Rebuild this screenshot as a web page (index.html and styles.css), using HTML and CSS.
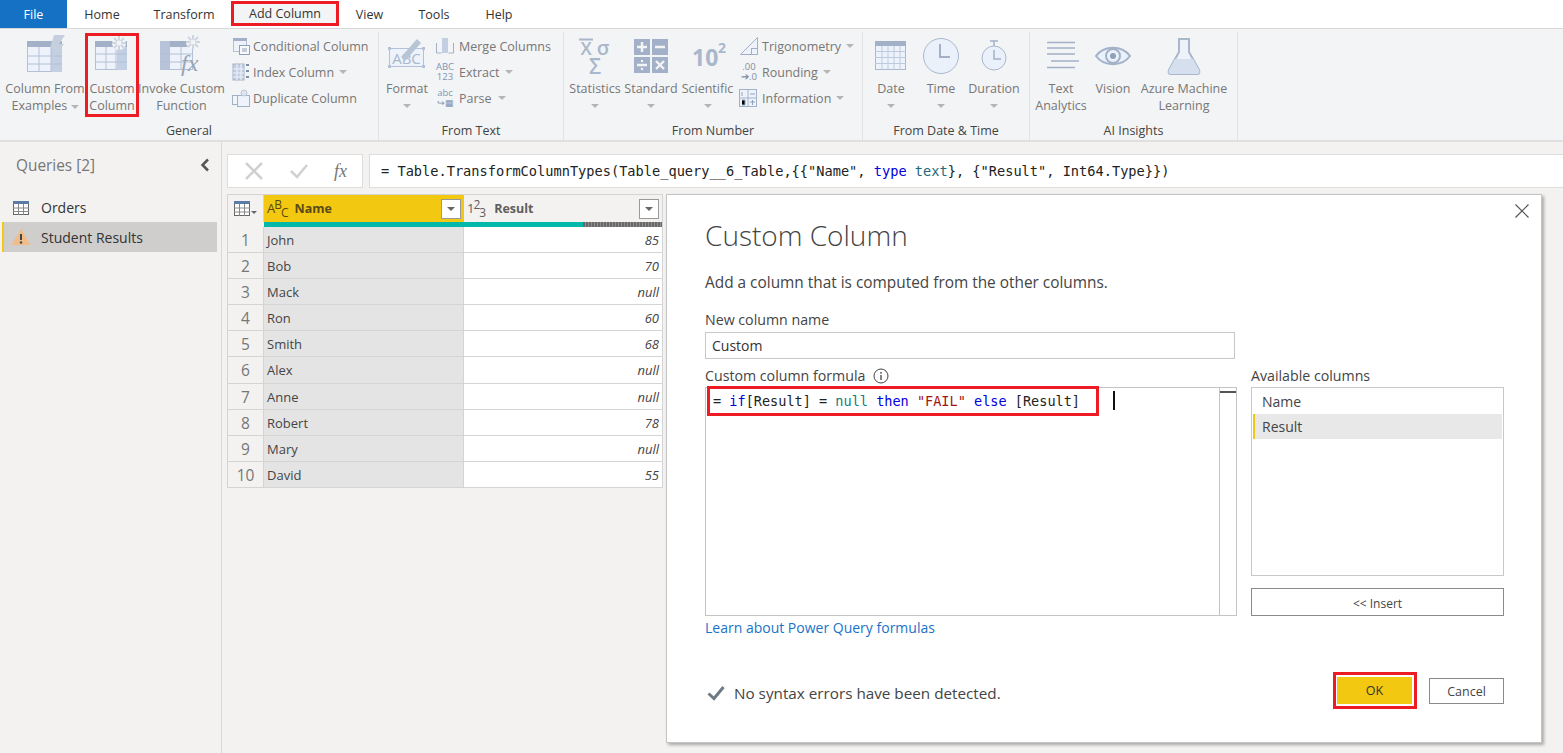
FILE: index.html
```html
<!DOCTYPE html>
<html>
<head>
<meta charset="utf-8">
<title>Custom Column</title>
<link rel="stylesheet" href="styles.css">
</head>
<body>
<div class="tabs">
    <div class="tab tab-file">File</div>
    <div class="tab tab-home">Home</div>
    <div class="tab tab-transform">Transform</div>
    <div class="tab tab-add">Add Column</div>
    <div class="tab tab-view">View</div>
    <div class="tab tab-tools">Tools</div>
    <div class="tab tab-help">Help</div>
</div>

<div class="ribbon">
    <div class="group group-general">
        <div class="items">
            <div class="big b-examples">
                <svg class="ico" width="46" height="46" viewBox="0 0 46 46"><rect x="5.5" y="8.5" width="34" height="30" fill="#eef3fb" stroke="#b3c0d6"/><rect x="5" y="8" width="35" height="6" fill="#a3b1c8"/><rect x="29" y="14" width="11" height="25" fill="#c3cfe2"/><path d="M5 23h35M5 31h35M17 14v25M29 14v25" stroke="#b3c0d6"/><path d="M32 2h11l-6 9h5l-13 17 4-13h-5z" fill="#c5cfdd"/></svg>
                <div class="lbl">Column From<br>Examples <i class="caret"></i></div>
            </div>
            <div class="big b-custom marked">
                <svg class="ico" width="46" height="46" viewBox="0 0 46 46"><rect x="6.5" y="8.5" width="31" height="28" fill="#eef3fb" stroke="#b3c0d6"/><rect x="6" y="8" width="32" height="6" fill="#a3b1c8"/><rect x="28" y="14" width="10" height="23" fill="#c3cfe2"/><path d="M6 21h32M6 29h32M17 14v23M27 14v23" stroke="#b3c0d6"/><circle cx="30" cy="10" r="7" fill="#f3f4f5"/><path d="M30 3v14M23 10h14M25 5l10 10M35 5L25 15" stroke="#cdd5e1" stroke-width="2"/><circle cx="30" cy="10" r="2.5" fill="#f3f4f5"/></svg>
                <div class="lbl">Custom<br>Column</div>
            </div>
            <div class="big b-invoke">
                <svg class="ico" width="46" height="46" viewBox="0 0 46 46"><rect x="1.5" y="8.5" width="32" height="28" fill="#eef3fb" stroke="#b3c0d6"/><rect x="1" y="8" width="33" height="6" fill="#a3b1c8"/><rect x="1" y="8" width="10" height="29" fill="#b6c3d8"/><path d="M1 21h33M1 29h33M22 14v23" stroke="#b3c0d6"/><circle cx="34" cy="9" r="7" fill="#f3f4f5"/><path d="M34 2v14M27 9h14M29 4l10 10M39 4L29 14" stroke="#cdd5e1" stroke-width="2"/><circle cx="34" cy="9" r="2.5" fill="#f3f4f5"/><text x="22" y="38" class="fx">fx</text></svg>
                <div class="lbl">Invoke Custom<br>Function</div>
            </div>
            <div class="smalls s-general">
                <div class="small"><svg width="18" height="18" viewBox="0 0 18 18"><rect x="1.5" y="1.5" width="13" height="13" fill="#eef3fb" stroke="#b3c0d6"/><rect x="1" y="1" width="14" height="3" fill="#a3b1c8"/><rect x="7.5" y="8.5" width="10" height="9" fill="#f8f9fb" stroke="#8ea0ba"/><path d="M10 12h5M10 14h5" stroke="#8ea0ba"/></svg><span>Conditional Column</span></div>
                <div class="small"><svg width="18" height="18" viewBox="0 0 18 18"><rect x="1" y="1" width="11" height="16" fill="#c3cfe2" stroke="#a3b1c8"/><path d="M1 6h11M1 10h11M1 14h11M5 1v16M9 1v16" stroke="#eef3fb"/><path d="M14 2h3M14 8h3M14 14h3" stroke="#7f8ea6" stroke-width="2"/></svg><span>Index Column</span><i class="caret"></i></div>
                <div class="small"><svg width="18" height="18" viewBox="0 0 18 18"><rect x=".5" y="6.5" width="9" height="9" fill="none" stroke="#a3b1c8"/><rect x="5.5" y="6.5" width="12" height="11" fill="#eef3fb" stroke="#a3b1c8"/><circle cx="12" cy="4" r="3" fill="#dfe5ee" stroke="#bcc8da"/></svg><span>Duplicate Column</span></div>
            </div>
        </div>
        <div class="group-name">General</div>
    </div>

    <div class="group group-text">
        <div class="items">
            <div class="big b-format">
                <svg class="ico" width="40" height="46" viewBox="0 0 40 46"><rect x="2.5" y="15.5" width="34" height="18" fill="#eef3fb" stroke="#b3c0d6"/><rect x="1" y="14" width="3" height="3" fill="#b3c0d6"/><rect x="35" y="14" width="3" height="3" fill="#b3c0d6"/><rect x="1" y="32" width="3" height="3" fill="#b3c0d6"/><rect x="35" y="32" width="3" height="3" fill="#b3c0d6"/><text x="19.5" y="31" class="abc">ABC</text><path d="M14 24L30 6l4 4-16 18z" fill="#b7c3d6"/></svg>
                <div class="lbl">Format</div>
                <i class="caret"></i>
            </div>
            <div class="smalls s-text">
                <div class="small"><svg width="20" height="18" viewBox="0 0 20 18"><path d="M1.5 6v10h5M18.5 6v10h-5" fill="none" stroke="#a3b1c8"/><rect x="7" y="1" width="6" height="15" fill="#c3cfe2"/></svg><span>Merge Columns</span></div>
                <div class="small"><span class="ico-txt">ABC<br>123</span><span>Extract</span><i class="caret"></i></div>
                <div class="small"><span class="ico-txt ico-parse">abc<br><b>↪▦</b></span><span>Parse</span><i class="caret"></i></div>
            </div>
        </div>
        <div class="group-name">From Text</div>
    </div>

    <div class="group group-number">
        <div class="items">
            <div class="big b-stat">
                <svg class="ico" width="56" height="46" viewBox="0 0 56 46"><text x="19" y="22" class="stat">X</text><text x="36" y="22" class="stat stat-s">σ</text><path d="M12 6.5h14" stroke="#a9b7cd" stroke-width="2"/><text x="28" y="41" class="stat sig">Σ</text></svg>
                <div class="lbl">Statistics</div>
                <i class="caret"></i>
            </div>
            <div class="big b-standard">
                <svg class="ico" width="46" height="46" viewBox="0 0 46 46"><rect x="6" y="6" width="16" height="16" fill="#a3b1c8"/><rect x="24" y="6" width="16" height="16" fill="#a3b1c8"/><rect x="6" y="24" width="16" height="16" fill="#a3b1c8"/><rect x="24" y="24" width="16" height="16" fill="#a3b1c8"/><path d="M9 14h10M14 9v10M27 14h10M9 32h10M28 28l8 8M36 28l-8 8" stroke="#f3f4f5" stroke-width="2.4"/><circle cx="14" cy="28" r="1.2" fill="#f3f4f5"/><circle cx="14" cy="36" r="1.2" fill="#f3f4f5"/></svg>
                <div class="lbl">Standard</div>
                <i class="caret"></i>
            </div>
            <div class="big b-sci">
                <svg class="ico" width="46" height="46" viewBox="0 0 46 46"><text x="7" y="33" class="ten">10</text><text x="33" y="20" class="two">2</text></svg>
                <div class="lbl">Scientific</div>
                <i class="caret"></i>
            </div>
            <div class="smalls s-number">
                <div class="small"><svg width="20" height="18" viewBox="0 0 20 18"><path d="M1.5 17.5L18.5 .5v17z" fill="#eef3fb" stroke="#a3b1c8"/><rect x="12.5" y="11.5" width="6" height="6" fill="none" stroke="#a3b1c8"/></svg><span>Trigonometry</span><i class="caret"></i></div>
                <div class="small"><span class="ico-txt ico-round">.00<br>➔.0</span><span>Rounding</span><i class="caret"></i></div>
                <div class="small"><svg width="20" height="18" viewBox="0 0 20 18"><rect x=".5" y=".5" width="17" height="17" fill="#eef3fb" stroke="#a3b1c8"/><path d="M9 0v18M0 9h18" stroke="#a3b1c8"/><path d="M11 5h5M11 13h5M13.5 11v5M3 3v4M3 11h3v5h-3" stroke="#8ea0ba"/></svg><span>Information</span><i class="caret"></i></div>
            </div>
        </div>
        <div class="group-name">From Number</div>
    </div>

    <div class="group group-date">
        <div class="items">
            <div class="big b-date">
                <svg class="ico" width="34" height="46" viewBox="0 0 34 46"><rect x="1.5" y="8.5" width="30" height="28" fill="#eef3fb" stroke="#a9b7cd"/><rect x="1" y="8" width="31" height="5" fill="#a3b1c8"/><path d="M1 18.5h31M1 24.5h31M1 30.5h31M8 13v24M14 13v24M20 13v24M26 13v24" stroke="#bccadd"/></svg>
                <div class="lbl">Date</div>
                <i class="caret"></i>
            </div>
            <div class="big b-time">
                <svg class="ico" width="38" height="46" viewBox="0 0 38 46"><circle cx="19" cy="23" r="17.5" fill="#eaf1fb" stroke="#a9b7cd"/><path d="M18 11v13h10" fill="none" stroke="#a3b1c8" stroke-width="2"/></svg>
                <div class="lbl">Time</div>
                <i class="caret"></i>
            </div>
            <div class="big b-duration">
                <svg class="ico" width="30" height="46" viewBox="0 0 30 46"><circle cx="15" cy="25" r="12" fill="#eaf1fb" stroke="#a9b7cd"/><path d="M11 8h8M15 8v5M15 17v9h7" fill="none" stroke="#a3b1c8" stroke-width="1.5"/></svg>
                <div class="lbl">Duration</div>
                <i class="caret"></i>
            </div>
        </div>
        <div class="group-name">From Date &amp; Time</div>
    </div>

    <div class="group group-ai">
        <div class="items">
            <div class="big b-analytics">
                <svg class="ico" width="36" height="46" viewBox="0 0 36 46"><path d="M4 9.5h28M4 15h28M4 21h28M8 28h28M4 34.5h28" stroke="#a3b1c8" stroke-width="1.5"/></svg>
                <div class="lbl">Text<br>Analytics</div>
            </div>
            <div class="big b-vision">
                <svg class="ico" width="38" height="46" viewBox="0 0 38 46"><path d="M2 23C10 12 28 12 36 23 28 34 10 34 2 23z" fill="#eaf1fb" stroke="#a3b1c8" stroke-width="2"/><circle cx="19" cy="23" r="7" fill="none" stroke="#a3b1c8" stroke-width="2"/><circle cx="19" cy="23" r="3" fill="#8ea0ba"/></svg>
                <div class="lbl">Vision</div>
            </div>
            <div class="big b-azure">
                <svg class="ico" width="36" height="46" viewBox="0 0 36 46"><path d="M13 6h10v13l10 18c1 3 0 4-2 4H5c-2 0-3-1-2-4l10-18z" fill="#eef3fb" stroke="#a9b7cd" stroke-width="2"/><path d="M9 26h18l6 11c1 3 0 4-2 4H5c-2 0-3-1-2-4z" fill="#d5dfee"/></svg>
                <div class="lbl">Azure Machine<br>Learning</div>
            </div>
        </div>
        <div class="group-name">AI Insights</div>
    </div>
</div>

<div class="main">
    <div class="side">
        <div class="side-head">
            <span>Queries [2]</span>
            <svg width="10" height="14" viewBox="0 0 10 14"><path d="M8 1.5L2.5 7 8 12.5" fill="none" stroke="#555" stroke-width="2.5"/></svg>
        </div>
        <div class="query">
            <svg width="16" height="14" viewBox="0 0 16 14"><rect x=".5" y=".5" width="15" height="13" fill="#fff" stroke="#666"/><rect x="0" y="0" width="16" height="3" fill="#5a7ba6"/><path d="M0 7h16M0 10.5h16M5.5 3v11M10.5 3v11" stroke="#888"/></svg>
            <span>Orders</span>
        </div>
        <div class="query selected">
            <svg width="20" height="18" viewBox="0 0 20 18"><path d="M10 1l9.5 16H.5z" fill="#f0bd8a"/><path d="M10 6v6" stroke="#444" stroke-width="2"/><circle cx="10" cy="14.5" r="1.2" fill="#444"/></svg>
            <span>Student Results</span>
        </div>
    </div>

    <div class="content">
        <div class="fbar">
            <div class="fbar-btns">
                <svg width="20" height="20" viewBox="0 0 20 20"><path d="M2 2l16 16M18 2L2 18" stroke="#d0d0d0" stroke-width="2.5"/></svg>
                <svg width="20" height="20" viewBox="0 0 20 20"><path d="M2 10l6 6L18 4" fill="none" stroke="#d0d0d0" stroke-width="2.5"/></svg>
                <span class="fx-btn">fx</span>
            </div>
            <div class="fbar-input">= Table.TransformColumnTypes(Table_query__6_Table,{{"Name", <span class="kw">type</span> <span class="kt">text</span>}, {"Result", Int64.Type}})</div>
        </div>

        <div class="grid">
            <div class="ghead">
                <div class="gcorner">
                    <svg width="16" height="15" viewBox="0 0 16 15"><rect x=".5" y=".5" width="15" height="14" fill="#fff" stroke="#666"/><rect x="0" y="0" width="16" height="3" fill="#5a7ba6"/><path d="M0 7h16M0 11h16M5.5 3v12M10.5 3v12" stroke="#888"/></svg>
                    <i class="caret caret-dark"></i>
                </div>
                <div class="gcol gname">
                    <span class="type-ic"><span>A</span><sup>B</sup><sub>C</sub></span>
                    <span class="gtitle">Name</span>
                    <span class="filter"><i class="caret caret-dark"></i></span>
                </div>
                <div class="gcol gresult">
                    <span class="type-ic"><span>1</span><sup>2</sup><sub>3</sub></span>
                    <span class="gtitle">Result</span>
                    <span class="filter"><i class="caret caret-dark"></i></span>
                </div>
            </div>
            <div class="gquality">
                <div class="q-gap"></div>
                <div class="q-name"></div>
                <div class="q-result"><div class="q-ok"></div><div class="q-empty"></div></div>
            </div>
            <div class="row"><div class="rn">1</div><div class="cn">John</div><div class="cv">85</div></div>
            <div class="row"><div class="rn">2</div><div class="cn">Bob</div><div class="cv">70</div></div>
            <div class="row"><div class="rn">3</div><div class="cn">Mack</div><div class="cv">null</div></div>
            <div class="row"><div class="rn">4</div><div class="cn">Ron</div><div class="cv">60</div></div>
            <div class="row"><div class="rn">5</div><div class="cn">Smith</div><div class="cv">68</div></div>
            <div class="row"><div class="rn">6</div><div class="cn">Alex</div><div class="cv">null</div></div>
            <div class="row"><div class="rn">7</div><div class="cn">Anne</div><div class="cv">null</div></div>
            <div class="row"><div class="rn">8</div><div class="cn">Robert</div><div class="cv">78</div></div>
            <div class="row"><div class="rn">9</div><div class="cn">Mary</div><div class="cv">null</div></div>
            <div class="row"><div class="rn">10</div><div class="cn">David</div><div class="cv">55</div></div>
        </div>
    </div>
</div>

<div class="dialog">
    <svg class="close" width="14" height="14" viewBox="0 0 14 14"><path d="M.5.5l13 13M13.5.5l-13 13" stroke="#555" stroke-width="1.2"/></svg>
    <div class="d-title">Custom Column</div>
    <div class="d-desc">Add a column that is computed from the other columns.</div>
    <div class="d-label">New column name</div>
    <div class="d-input">Custom</div>
    <div class="d-cols">
        <div class="d-left">
            <div class="d-label d-label-f">Custom column formula
                <svg width="16" height="16" viewBox="0 0 16 16"><circle cx="8" cy="8" r="7" fill="none" stroke="#444"/><path d="M8 7v5" stroke="#444" stroke-width="1.3"/><circle cx="8" cy="4.8" r=".9" fill="#444"/></svg>
            </div>
            <div class="editor">
                <div class="code">
                    <span class="code-mark">= <span class="kw">if</span>[Result] = <span class="kn">null</span> <span class="kw">then</span> <span class="ks">"FAIL"</span> <span class="kw">else</span> [Result]</span>
                    <i class="cursor"></i>
                </div>
                <div class="minimap"><div class="minimap-bar"></div></div>
            </div>
            <div class="d-link">Learn about Power Query formulas</div>
        </div>
        <div class="d-right">
            <div class="d-label d-label-f">Available columns</div>
            <div class="avail">
                <div class="av-item">Name</div>
                <div class="av-item av-sel">Result</div>
            </div>
            <div class="insert">&lt;&lt; Insert</div>
        </div>
    </div>
    <div class="d-foot">
        <svg class="d-check" width="18" height="16" viewBox="0 0 18 16"><path d="M1.5 8.5l5.5 5L16.5 2" fill="none" stroke="#6e7b84" stroke-width="3"/></svg>
        <span class="d-status">No syntax errors have been detected.</span>
        <div class="ok-mark"><div class="ok">OK</div></div>
        <div class="cancel">Cancel</div>
    </div>
</div>
</body>
</html>
```

FILE: styles.css
```css
* {
    box-sizing: border-box;
}
html, body {
    margin: 0;
    height: 100%;
}
body {
    width: 1563px;
    height: 753px;
    overflow: hidden;
    position: relative;
    background: #f3f2f1;
    font: 12.5px "Open Sans", sans-serif;
    color: #333;
}
svg {
    display: block;
    flex: none;
}

/* tabs */
.tabs {
    display: flex;
    height: 29px;
    background: #fff;
    border-bottom: 1px solid #d8d8d8;
}
.tab {
    display: flex;
    align-items: center;
    justify-content: center;
    height: 28px;
    color: #333;
}
.tab-file { width: 67px; background: #1571c4; color: #fff; }
.tab-home { width: 70px; }
.tab-transform { width: 94px; }
.tab-add { width: 108px; height: 25px; margin-top: 1px; border: 3px solid #ed1c24; background: #f3f4f5; }
.tab-view { width: 61px; }
.tab-tools { width: 68px; }
.tab-help { width: 50px; margin-left: 6px; }

/* ribbon */
.ribbon {
    display: flex;
    height: 113px;
    background: #f3f4f5;
    border-bottom: 2px solid #e0e0e0;
    padding-top: 3px;
}
.group {
    display: flex;
    flex-direction: column;
    height: 108px;
    border-right: 1px solid #e2e2e2;
}
.group-general { width: 379px; }
.group-text { width: 185px; }
.group-number { width: 299px; }
.group-date { width: 167px; }
.group-ai { width: 208px; }
.items {
    display: flex;
    height: 90px;
}
.group-name {
    text-align: center;
    line-height: 18px;
    color: #444;
}
.big {
    display: flex;
    flex-direction: column;
    align-items: center;
    height: 84px;
    flex: none;
    margin-top: 1px;
}
.ico {
    height: 46px;
    margin-bottom: 1px;
}
.lbl {
    text-align: center;
    line-height: 17px;
    color: #777;
    white-space: nowrap;
}
.caret {
    display: inline-block;
    width: 0;
    height: 0;
    border: 4px solid transparent;
    border-top: 4px solid #b5b5b5;
    border-bottom: 0;
    vertical-align: middle;
}
.big > .caret {
    margin-top: 7px;
}
.caret-dark {
    border-top-color: #666;
}
.b-examples { width: 78px; margin-left: 6px; }
.b-custom { width: 54px; margin-left: 1px; }
.b-invoke { width: 85px; }
.marked {
    border: 3px solid #ed1c24;
}
.marked .ico {
    margin-top: -3px;
}
.b-format { width: 54px; margin-left: 1px; }
.b-stat { width: 56px; margin-left: 3px; }
.b-standard { width: 56px; }
.b-sci { width: 57px; }
.b-date { width: 50px; margin-left: 3px; }
.b-time { width: 50px; }
.b-duration { width: 56px; }
.b-analytics { width: 62px; }
.b-vision { width: 42px; }
.b-azure { width: 100px; }
.smalls {
    display: flex;
    flex-direction: column;
    flex: none;
    padding-top: 1px;
}
.s-general { margin-left: 8px; }
.s-text { margin-left: 1px; }
.s-number { margin-left: 3px; }
.small {
    display: flex;
    align-items: center;
    gap: 3px;
    height: 26px;
    color: #777;
    white-space: nowrap;
}
.s-text .small {
    gap: 4px;
}
.small .caret {
    margin-left: 2px;
}
.ico-txt {
    width: 20px;
    font-size: 9.5px;
    line-height: 10px;
    text-align: center;
    color: #7f94b4;
}
.ico-parse b {
    font-weight: 400;
    font-size: 9px;
}
.ico-round {
    color: #7f8ea6;
}
.fx {
    font: italic 24px "Liberation Serif", serif;
    fill: #9aa4b2;
}
.abc {
    font: 15px "Open Sans", sans-serif;
    fill: #a9b7cd;
    text-anchor: middle;
}
.stat {
    font: 600 18px "Open Sans", sans-serif;
    fill: #a9b7cd;
    text-anchor: middle;
}
.stat-s {
    font-size: 20px;
}
.sig {
    font-size: 21px;
}
.ten {
    font: 700 23px "Open Sans", sans-serif;
    fill: #a9b7cd;
}
.two {
    font: 700 14px "Open Sans", sans-serif;
    fill: #a9b7cd;
}

/* main area */
.main {
    display: flex;
    height: 611px;
}
.side {
    width: 222px;
    flex: none;
    padding: 0 4px 0 2px;
    border-right: 1px solid #d8d8d8;
}
.side-head {
    display: flex;
    align-items: center;
    justify-content: space-between;
    height: 46px;
    padding: 0 7px 0 14px;
    font-size: 15.4px;
    color: #777;
}
.query {
    display: flex;
    align-items: center;
    height: 30px;
    padding-left: 11px;
    gap: 12px;
    font-size: 14px;
    color: #333;
}
.selected {
    background: #cfcecc;
    border-left: 2px solid #f2c811;
    padding-left: 7px;
    gap: 10px;
}
.side-head + .query {
    height: 29px;
    margin-top: 5px;
}
.content {
    flex: 1;
    padding: 12px 0 0 5px;
    min-width: 0;
}
.fbar {
    display: flex;
    gap: 6px;
    height: 34px;
}
.fbar-btns {
    display: flex;
    align-items: center;
    width: 136px;
    flex: none;
    padding-left: 16px;
    gap: 25px;
    background: #fff;
    border: 1px solid #ddd;
}
.fx-btn {
    font: italic 18px "Liberation Serif", serif;
    color: #777;
}
.fbar-input {
    flex: 1;
    background: #fff;
    border: 1px solid #ddd;
    border-right: 0;
    padding-left: 11px;
    font: 13.65px/33px "DejaVu Sans Mono", monospace;
    color: #222;
    white-space: nowrap;
}
.kw { color: #0000e0; }
.kt { color: #256a7c; }
.kn { color: #0f7f7f; }
.ks { color: #a31515; }

/* table */
.grid {
    width: 436px;
    margin-top: 6px;
    border-left: 1px solid #d4d4d4;
    border-right: 1px solid #d4d4d4;
    border-top: 1px solid #d4d4d4;
}
.ghead {
    display: flex;
    height: 27px;
}
.gcorner {
    display: flex;
    align-items: center;
    width: 36px;
    padding-left: 6px;
    gap: 1px;
    border-right: 1px solid #d4d4d4;
}
.gcorner .caret {
    margin-top: 8px;
    border-width: 3px;
    border-bottom: 0;
}
.gcol {
    display: flex;
    align-items: center;
    padding-left: 3px;
}
.gname {
    width: 200px;
    background: #f2c811;
    color: #5a4a14;
}
.gresult {
    width: 198px;
    color: #605e5c;
}
.gtitle {
    flex: 1;
    font-weight: 700;
    margin-left: 7px;
}
.gresult .gtitle {
    margin-left: 9px;
}
.filter {
    display: flex;
    align-items: center;
    justify-content: center;
    width: 20px;
    height: 20px;
    margin-right: 3px;
    background: #fff;
    border: 1px solid #999;
}
.type-ic {
    font-size: 13px;
    white-space: nowrap;
    line-height: 1;
    letter-spacing: -1px;
}
.type-ic sup, .type-ic sub {
    font-size: 12px;
    line-height: 0;
}
.type-ic sup { vertical-align: 4px; }
.type-ic sub { vertical-align: -4px; }
.gquality {
    display: flex;
    height: 5px;
}
.q-gap { width: 36px; }
.q-name { width: 200px; background: #01b8aa; }
.q-result { display: flex; width: 198px; background: #01b8aa; }
.q-ok { width: 119px; }
.q-empty {
    flex: 1;
    background: repeating-linear-gradient(90deg, #6b6a69 0 2px, #8f8e8d 2px 3px);
}
.row {
    display: flex;
    height: 26.1px;
    border-bottom: 1px solid #d4d4d4;
    font-size: 13px;
    line-height: 26px;
}
.rn {
    width: 36px;
    text-align: center;
    font-size: 15.5px;
    color: #777;
    border-right: 1px solid #d4d4d4;
}
.cn {
    width: 200px;
    padding-left: 3px;
    background: #e4e4e4;
    border-right: 1px solid #d4d4d4;
    color: #444;
}
.cv {
    flex: 1;
    padding-right: 3px;
    text-align: right;
    font-style: italic;
    background: #fff;
    color: #444;
}

/* dialog */
.dialog {
    position: absolute;
    left: 666px;
    top: 194px;
    width: 876px;
    height: 549px;
    padding: 0 37px 0 38px;
    background: #fff;
    border: 1px solid #c4c4c4;
    box-shadow: 2px 2px 3px rgba(0, 0, 0, 0.3);
}
.close {
    position: absolute;
    right: 12px;
    top: 9px;
}
.d-title {
    padding-top: 21px;
    height: 78px;
    font: 300 28px "Open Sans", sans-serif;
    color: #444;
}
.d-desc {
    font-size: 15.4px;
    line-height: 20px;
    color: #444;
    height: 38px;
}
.d-label {
    font-size: 14.2px;
    line-height: 18px;
    color: #444;
    height: 21px;
}
.d-input {
    width: 530px;
    height: 27px;
    padding-left: 6px;
    border: 1px solid #c8c8c8;
    font-size: 14px;
    line-height: 25px;
    color: #333;
}
.d-cols {
    display: flex;
    gap: 14px;
    margin-top: 6px;
}
.d-left { width: 532px; }
.d-right { width: 253px; }
.d-label-f {
    display: flex;
    align-items: center;
    gap: 8px;
    height: 22px;
}
.editor {
    display: flex;
    height: 229px;
    border: 1px solid #c4c4c4;
}
.code {
    flex: 1;
    display: flex;
    align-items: flex-start;
    padding-left: 1px;
    padding-top: 1px;
    font: 13.56px/22px "DejaVu Sans Mono", monospace;
    color: #222;
    white-space: nowrap;
}
.code-mark {
    display: block;
    width: 392px;
    height: 30px;
    padding: 1px 0 0 3px;
    margin-top: -3px;
    border: 3px solid #ed1c24;
}
.cursor {
    width: 2px;
    height: 19px;
    margin: 2px 0 0 14px;
    background: #111;
}
.minimap {
    width: 17px;
    border-left: 1px solid #c4c4c4;
    padding-top: 3px;
}
.minimap-bar {
    height: 2px;
    background: #555;
}
.d-link {
    margin-top: 2px;
    font-size: 14px;
    line-height: 20px;
    color: #1a73c9;
}
.avail {
    height: 189px;
    border: 1px solid #c8c8c8;
    padding: 1px;
}
.av-item {
    height: 25px;
    line-height: 25px;
    padding-left: 9px;
    font-size: 14px;
    color: #444;
}
.av-sel {
    background: #e8e8e8;
    border-left: 2px solid #f2c811;
    padding-left: 7px;
}
.insert {
    height: 28px;
    margin-top: 12px;
    border: 1px solid #8a8a8a;
    text-align: center;
    line-height: 29px;
    font-size: 12px;
    color: #444;
}
.d-foot {
    display: flex;
    align-items: center;
    margin-top: 34px;
    padding-left: 2px;
}
.d-check {
    margin-top: 4px;
}
.d-status {
    flex: 1;
    margin-left: 9px;
    padding-top: 4px;
    font-size: 15.25px;
    color: #444;
}
.ok-mark {
    padding: 2px 2px 2px 1px;
    border: 3px solid #ed1c24;
    margin-right: 12px;
}
.ok {
    width: 75px;
    height: 27px;
    background: #f2c811;
    text-align: center;
    line-height: 27px;
    color: #333;
}
.cancel {
    width: 75px;
    height: 26px;
    border: 1px solid #8a8a8a;
    text-align: center;
    line-height: 25px;
    color: #444;
}
```
